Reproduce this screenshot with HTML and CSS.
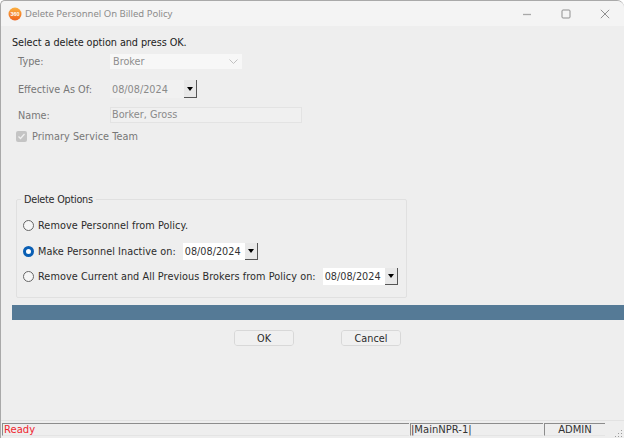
FILE: index.html
```html
<!DOCTYPE html>
<html lang="en">
<head>
<meta charset="utf-8">
<title>Delete Personnel On Billed Policy</title>
<link rel="stylesheet" href="styles.css">
</head>
<body>
<div class="window">
  <header class="titlebar">
    <svg class="logo" width="14" height="14" viewBox="0 0 14 14"><defs><linearGradient id="lg" x1="0" y1="0" x2="0" y2="1"><stop offset="0" stop-color="#fbb040"/><stop offset="1" stop-color="#f0641e"/></linearGradient></defs><circle cx="7" cy="7" r="6.5" fill="url(#lg)"/><text class="logo-text" x="7" y="9.2" text-anchor="middle">360</text></svg>
    <span class="title">Delete Personnel On Billed Policy</span>
    <div class="controls">
      <svg width="10" height="10" viewBox="0 0 10 10"><path d="M1 5.5h8" stroke="#a8a8a8" stroke-width="1.3"/></svg>
      <svg width="10" height="10" viewBox="0 0 10 10"><rect x="1" y="1" width="8" height="8" rx="1" fill="none" stroke="#8f8f8f" stroke-width="1"/></svg>
      <svg width="10" height="10" viewBox="0 0 10 10"><path d="M.8.8l8.4 8.4M9.2.8L.8 9.2" stroke="#8f8f8f" stroke-width="1"/></svg>
    </div>
  </header>
  <main class="content">
    <p class="intro">Select a delete option and press OK.</p>
    <div class="row row-type">
      <label class="lbl">Type:</label>
      <div class="select">Broker
        <svg width="9" height="5" viewBox="0 0 9 5"><path d="M.5.5l4 4 4-4" fill="none" stroke="#c0c0c0"/></svg>
      </div>
    </div>
    <div class="row row-eff">
      <label class="lbl">Effective As Of:</label>
      <div class="date disabled"><span class="date-text">08/08/2024</span><span class="drop drop-big"><i></i></span></div>
    </div>
    <div class="row row-name">
      <label class="lbl">Name:</label>
      <div class="textbox">Borker, Gross</div>
    </div>
    <div class="check-row">
      <svg width="11" height="11" viewBox="0 0 11 11"><rect width="11" height="11" rx="2" fill="#c4c4c4"/><path d="M2.5 5.5l2 2 4-4.5" fill="none" stroke="#efefef" stroke-width="1.3"/></svg>
      <span>Primary Service Team</span>
    </div>
    <fieldset class="options">
      <legend>Delete Options</legend>
      <div class="opt opt-1"><span class="radio"></span><span>Remove Personnel from Policy.</span></div>
      <div class="opt opt-2"><span class="radio on"></span><span>Make Personnel Inactive on:</span>
        <div class="date"><span class="date-text">08/08/2024</span><span class="drop"><i></i></span></div></div>
      <div class="opt opt-3"><span class="radio"></span><span>Remove Current and All Previous Brokers from Policy on:</span>
        <div class="date"><span class="date-text">08/08/2024</span><span class="drop"><i></i></span></div></div>
    </fieldset>
    <div class="bar"></div>
    <div class="buttons">
      <button class="btn" type="button">OK</button>
      <button class="btn" type="button">Cancel</button>
    </div>
  </main>
  <footer class="status">
    <span class="pane pane-ready">Ready</span>
    <span class="pane pane-main">|MainNPR-1|</span>
    <span class="pane pane-admin">ADMIN</span>
    <svg class="grip" width="8" height="8" viewBox="0 0 8 8"><path d="M6 1h1v1H6zM3 4h1v1H3zM6 4h1v1H6zM0 7h1v1H0zM3 7h1v1H3zM6 7h1v1H6z" fill="#9a9a9a"/></svg>
  </footer>
</div>
</body>
</html>
```
FILE: styles.css
```css
* { box-sizing: border-box; }
html, body { margin: 0; height: 100%; }
body { background: #fff; font: 9.7px "DejaVu Sans", sans-serif; color: #2b2b2b; overflow: hidden; }
.window {
  width: 624px; height: 438px; display: flex; flex-direction: column;
  background: #eeeeee; border-top: 1px solid #a9a9a9; border-left: 1px solid #a9a9a9;
  border-top-left-radius: 5px; border-top-right-radius: 7px;
}
.titlebar { height: 25px; flex: none; background: #f4f4f4; border-top-left-radius: 5px; border-top-right-radius: 7px; display: flex; align-items: center; padding-left: 7px; }
.logo { margin-right: 3px; }
.logo-text { font: bold 5.5px "Liberation Sans", sans-serif; fill: #fff; }
.title { font: 9.5px "Noto Sans", sans-serif; color: #8c8c8c; }
.controls { margin-left: auto; display: flex; gap: 29px; padding-right: 14px; }
.content { flex: 1; display: flex; flex-direction: column; padding-left: 11px; }
.intro { margin: 10px 0 0; height: 13px; line-height: 13px; color: #222; letter-spacing: -0.06px; }
.row { display: flex; align-items: center; }
.row-type { margin-top: 5px; height: 15px; }
.row-eff { margin-top: 11px; height: 18px; }
.row-name { margin-top: 9px; height: 16px; }
.lbl { width: 98px; padding-left: 6px; color: #777; }
.select { width: 132px; height: 15px; background: #f7f7f7; color: #8f8f8f; padding-left: 3px; padding-right: 2px; display: flex; align-items: center; justify-content: space-between; }
.select svg { margin-right: 2px; }
.date { display: flex; align-items: stretch; height: 17px; background: #fff; }
.date-text { display: flex; align-items: center; padding-left: 2px; flex: 1; color: #333; letter-spacing: 0; }
.date.disabled { width: 87px; background: #f1f1f1; height: 18px; }
.date.disabled .date-text { color: #8a8a8a; }
.drop { width: 13px; background: #e8e8e8; border-right: 1px solid #555; border-bottom: 1px solid #555; display: flex; align-items: center; justify-content: center; }
.drop i { border: 3px solid transparent; border-top: 4px solid #000; border-bottom: 0; }
.textbox { width: 192px; height: 16px; background: #f0f0f0; border: 1px solid #e3e3e3; color: #8a8a8a; padding-left: 1px; line-height: 13px; }
.check-row { margin-top: 7px; height: 13px; display: flex; align-items: center; gap: 5px; padding-left: 4px; color: #777; letter-spacing: 0.05px; }
.options { margin: 50px 0 0 4px; width: 391px; height: 105px; padding: 0 0 0 6px; border: 1px solid #e0e0e0; border-radius: 2px; }
.options legend { padding: 0 3px; margin-left: -2px; color: #2b2b2b; line-height: 13px; letter-spacing: -0.25px; }
.opt { display: flex; align-items: center; gap: 4px; color: #2b2b2b; height: 17px; letter-spacing: 0.07px; }
.opt-1 { margin-top: 11px; }
.opt-2 { margin-top: 9px; }
.opt-3 { margin-top: 8px; }
.opt .date { width: 75px; margin-left: 3px; }
.radio { width: 11px; height: 11px; border-radius: 50%; border: 1px solid #666; background: #f6f6f6; flex: none; }
.radio.on { border: 3px solid #0a5fb4; background: #fff; }
.bar { margin-top: 7px; height: 15px; background: #557a96; flex: none; }
.buttons { margin-top: 10px; display: flex; gap: 47px; padding-left: 222px; }
.btn { width: 60px; height: 16px; padding: 0; background: #f0f0f0; border: 1px solid #fff; outline: 1px solid #d8d8d8; outline-offset: -1px; border-radius: 3px; font: inherit; color: #2b2b2b; }
.status { height: 18px; margin-top: auto; flex: none; display: flex; align-items: stretch; padding: 2px 0 2px 1px; gap: 1px; position: relative; border-top: 1px solid #e2e2e2; }
.pane { border-top: 1px solid #8c8c8c; border-left: 1px solid #8c8c8c; border-bottom: 1px solid #e4e4e4; display: flex; align-items: center; font-size: 10px; padding-bottom: 1px; }
.pane-ready { width: 407px; color: #f0262e; padding-left: 1px; }
.pane-main { width: 133px; padding-left: 0; color: #333; }
.pane-admin { width: 61px; justify-content: center; color: #333; }
.grip { position: absolute; right: 1px; bottom: 1px; }
```
